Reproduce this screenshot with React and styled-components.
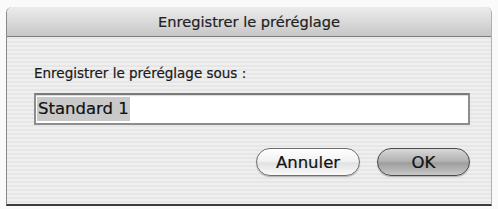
import styled, { createGlobalStyle } from "styled-components";

const Global = createGlobalStyle`
  html, body {
    margin: 0;
    padding: 0;
    background: #fafafa;
    font-family: "DejaVu Sans", "Liberation Sans", sans-serif;
    -webkit-text-stroke: 0.2px currentColor;
  }
`

const Page = styled.div`
  width: 498px;
  height: 209px;
  padding: 7px 6px 0 6px;
  box-sizing: border-box;
`

const Window = styled.div`
  height: 199px;
  display: flex;
  flex-direction: column;
  border-radius: 6px 6px 0 0;
  border-left: 1px solid #8a8a8a;
  border-right: 1px solid #b0b0b0;
  border-bottom: 2px solid #3c3c3c;
  box-sizing: border-box;
  overflow: hidden;
  background: repeating-linear-gradient(
    to bottom,
    #efefef 0px,
    #efefef 2px,
    #e6e6e6 2px,
    #e6e6e6 4px
  );
`

const TitleBar = styled.div`
  height: 29px;
  flex-shrink: 0;
  display: flex;
  align-items: center;
  justify-content: center;
  background: linear-gradient(to bottom, #ececec 0%, #dadada 50%, #c6c6c6 100%);
  border-bottom: 1px solid #7e7e7e;
  font-size: 14.6px;
  color: #222;
`

const Body = styled.div`
  flex: 1;
  display: flex;
  flex-direction: column;
  padding: 27px 21px 0 27px;
`

const Label = styled.div`
  font-size: 13.5px;
  color: #1a1a1a;
  line-height: 18px;
`

const Field = styled.div`
  margin-top: 11px;
  height: 32px;
  box-sizing: border-box;
  border: 2px solid #8d8d8d;
  border-top-color: #7a7a7a;
  background: #fff;
  box-shadow: inset 0 1px 1px rgba(0,0,0,0.15);
  display: flex;
  align-items: center;
  padding-left: 1px;
`

const Selected = styled.span`
  background: #c9c9c9;
  font-size: 16.5px;
  color: #111;
  line-height: 24px;
  padding: 0 1px 0 1px;
`

const Actions = styled.div`
  margin-top: 23px;
  display: flex;
  justify-content: flex-end;
  gap: 17px;
`

const Button = styled.button`
  height: 28px;
  min-width: ${p => p.$w}px;
  border-radius: 14px;
  font-family: inherit;
  font-size: 16.5px;
  color: #111;
  padding: 0 12px;
  border: 1px solid ${p => (p.$primary ? "#4a4a4a" : "#6e6e6e")};
  background: ${p =>
    p.$primary
      ? "linear-gradient(to bottom, #d8d8d8 0%, #b4b4b4 45%, #9e9e9e 55%, #c8c8c8 100%)"
      : "linear-gradient(to bottom, #ffffff 0%, #f2f2f2 45%, #e2e2e2 55%, #fafafa 100%)"};
  box-shadow: 0 1px 1px rgba(0,0,0,0.25);
`

export default function App() {
  return (
    <Page>
      <Global />
      <Window>
        <TitleBar>Enregistrer le préréglage</TitleBar>
        <Body>
          <Label>Enregistrer le préréglage sous :</Label>
          <Field>
            <Selected>Standard 1</Selected>
          </Field>
          <Actions>
            <Button $w={104}>Annuler</Button>
            <Button $w={93} $primary>OK</Button>
          </Actions>
        </Body>
      </Window>
    </Page>
  );
}
